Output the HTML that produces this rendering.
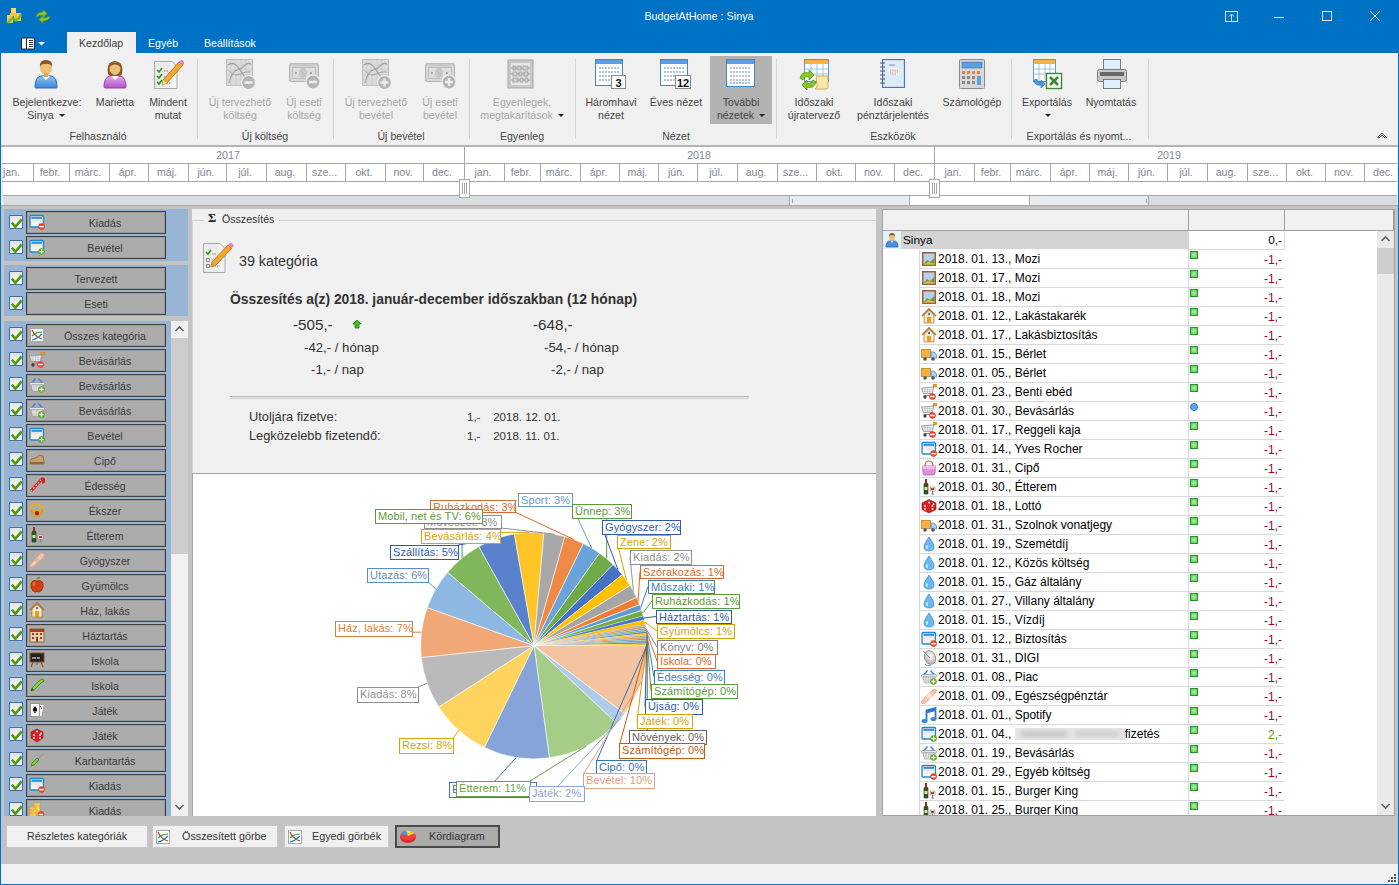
<!DOCTYPE html>
<html><head><meta charset="utf-8">
<style>
*{box-sizing:border-box}
html,body{margin:0;padding:0}
body{width:1399px;height:885px;overflow:hidden;position:relative;background:#F0F0F0;font-family:"Liberation Sans",sans-serif;font-size:10.5px;color:#444}
.a{position:absolute}
.t{position:absolute;white-space:nowrap;line-height:13px}
.c{text-align:center}
/* title */
#title{left:0;top:0;width:1399px;height:53px;background:#0072C6}
.tab{color:#fff;font-size:10.6px}
/* ribbon */
.rl{position:absolute;white-space:nowrap;line-height:13px;text-align:center;color:#444;font-size:10.6px}
.dis{color:#A6A6A6}
.sep{position:absolute;top:59px;width:1px;height:80px;background:#D5D5D5}
.ico{position:absolute;width:32px;height:32px}
/* timeline */
.mo{position:absolute;top:164px;height:17px;line-height:17px;text-align:center;padding-right:3px;color:#7E8790;font-size:10.6px;border-left:1px solid #A0A8B0;overflow:hidden}
.yr{position:absolute;top:147px;height:16px;line-height:16px;text-align:center;color:#7E8790;font-size:10.6px}
/* left panel */
.cb{position:absolute;left:9px;width:14px;height:14px;background:linear-gradient(#E4E4E4,#fff);border:1px solid #3D6FAE;border-radius:1px}
.cb svg{position:absolute;left:0;top:0}
.btn{position:absolute;left:26px;width:140px;height:23px;background:#ACACAC;border:1px solid #404040;box-shadow:inset 0 0 0 1px #9A9A9A}
.btn span{position:absolute;left:18px;right:0;top:4px;text-align:center;color:#3A3A3A;font-size:10.6px;line-height:14px;white-space:nowrap}
.bi{position:absolute;left:2px;top:2px;width:16px;height:16px}
/* right list */
.row{position:absolute;left:920px;width:364px;height:19px;border-bottom:1px solid #D8D8D8;background:#fff}
.row .dt{position:absolute;left:18px;top:2px;font-size:12px;color:#000;white-space:nowrap;line-height:14px}
.row .am{position:absolute;left:268px;width:96px;top:0;height:18px;border-left:1px solid #D8D8D8}
.row .am b{position:absolute;right:2px;top:3px;font-weight:normal;font-size:12px;color:#A00030;line-height:14px}
.row .am i{position:absolute;left:1px;top:1px;width:8px;height:8px;background:radial-gradient(#B8F0B0,#50C850);border:1px solid #1E9A1E}
.row .ri{position:absolute;left:1px;top:1px;width:16px;height:16px}
/* labels on pie */
.pl{position:absolute;height:15px;background:#fff;border:1px solid;font-size:11px;line-height:13px;padding:0 2px;white-space:nowrap;overflow:hidden;letter-spacing:.1px}
.bb{position:absolute;top:825px;height:23px;background:#F0F0F0;border:1px solid #C8C8C8;color:#333;font-size:10.8px;line-height:21px}
</style></head><body>
<!-- TITLE BAR -->
<div id="title" class="a"></div>
<!--TITLEICONS-->
<div class="t" style="left:599px;top:10px;width:200px;text-align:center;color:#fff;font-size:10.8px">BudgetAtHome : Sinya</div>
<!-- window buttons -->
<svg class="a" style="left:1220px;top:6px" width="170" height="20">
 <g stroke="#E6E6E6" stroke-width="1" fill="none">
  <rect x="5.5" y="5.5" width="12" height="10"/><line x1="11.5" y1="9" x2="11.5" y2="15.5"/><path d="M9 10.5 L11.5 8 L14 10.5"/>
  <line x1="54" y1="11.5" x2="64" y2="11.5"/>
  <rect x="102.5" y="5.5" width="9" height="9"/>
  <path d="M150 5 L160 15 M160 5 L150 15"/>
 </g>
</svg>
<!-- tabs -->
<div class="a" style="left:67px;top:32px;width:69px;height:22px;background:#F0F0F0"></div>
<div class="t tab" style="left:79px;top:37px;color:#3C3C3C">Kezdőlap</div>
<div class="t tab" style="left:148px;top:37px">Egyéb</div>
<div class="t tab" style="left:204px;top:37px">Beállítások</div>
<svg class="a" style="left:18px;top:35px" width="30" height="16">
 <rect x="3" y="2.5" width="14" height="12" rx="1.5" fill="#1a2a40"/>
 <rect x="4" y="3.5" width="4" height="10" fill="#F4F4F4"/><rect x="9" y="3.5" width="7" height="10" fill="#fff"/>
 <path d="M11 5.5h4M11 7.5h4M11 9.5h4M11 11.5h4" stroke="#333" stroke-width="1"/>
 <path d="M20 7h7l-3.5 3.5z" fill="#fff"/>
</svg>
<!-- ribbon body border -->
<div class="a" style="left:0;top:53px;width:1px;height:832px;background:#0072C6"></div>
<div class="a" style="left:1398px;top:53px;width:1px;height:832px;background:#0072C6"></div>
<div class="a" style="left:0;top:884px;width:1399px;height:1px;background:#0072C6"></div>
<div class="a" style="left:1px;top:145px;width:1397px;height:2px;background:#B4B4B4"></div>
<!-- quick access icons -->
<svg class="a" style="left:6px;top:7px" width="50" height="18">
 <rect x="5" y="1" width="5" height="6" fill="#F8D868"/><rect x="4" y="6" width="7" height="3" fill="#F5C048"/>
 <rect x="1" y="8" width="6" height="8" fill="#F8C458"/><rect x="8" y="6" width="7" height="8" fill="#F7C24E"/>
 <path d="M1.5 16 L6.5 11 L10 13.5 L15 8.5" stroke="#6BBE1E" stroke-width="2.3" fill="none"/>
 <path d="M13 7.5 L16 6.5 L15.5 10Z" fill="#6BBE1E"/>
 <path d="M30 10 Q31 5 37 5 L37 2.5 L41 6.5 L37 10.5 L37 8 Q33 8 30 10Z" fill="#8CC820" stroke="#5E9A10" stroke-width=".7"/>
 <path d="M44 9 Q43 14 37 14 L37 16.5 L33 12.5 L37 8.5 L37 11 Q41 11 44 9Z" fill="#8CC820" stroke="#5E9A10" stroke-width=".7"/>
</svg>
<!-- ribbon icons -->
<svg class="ico" style="left:30px;top:58px" viewBox="0 0 32 32">
 <defs><linearGradient id="gb" x1="0" y1="0" x2="0" y2="1"><stop offset="0" stop-color="#8CC4F0"/><stop offset="1" stop-color="#3A86D8"/></linearGradient>
 <linearGradient id="gp" x1="0" y1="0" x2="0" y2="1"><stop offset="0" stop-color="#E8A8F0"/><stop offset="1" stop-color="#B050C8"/></linearGradient></defs>
 <path d="M5 29 Q5 19 11 18 L21 18 Q27 19 27 29 Q27 30 26 30 L6 30 Q5 30 5 29Z" fill="url(#gb)" stroke="#2A6BB8" stroke-width="1"/>
 <path d="M12 18 L16 22 L20 18Z" fill="#fff"/>
 <ellipse cx="16" cy="10" rx="6" ry="7" fill="#E8C078"/>
 <path d="M10 9 Q9 2 16 2 Q23 2 22 9 Q20 5 16 6 Q12 5 10 9Z" fill="#8A5520"/>
 <rect x="14" y="15" width="4" height="4" fill="#D8A860"/>
</svg>
<svg class="ico" style="left:99px;top:58px" viewBox="0 0 32 32">
 <path d="M9 16 Q7 4 16 3 Q25 4 23 16 L21 18 L11 18Z" fill="#8A5520"/>
 <path d="M5 29 Q5 19 11 18 L21 18 Q27 19 27 29 Q27 30 26 30 L6 30 Q5 30 5 29Z" fill="url(#gp)" stroke="#9A40B0" stroke-width="1"/>
 <path d="M12 18 L16 22 L20 18Z" fill="#fff"/>
 <ellipse cx="16" cy="10.5" rx="5.5" ry="6.5" fill="#E8C078"/>
 <path d="M10.5 9 Q11 4 16 4.5 Q21 4 21.5 9 Q19 6 16 6.5 Q13 6 10.5 9Z" fill="#8A5520"/>
</svg>
<svg class="ico" style="left:152px;top:58px" viewBox="0 0 32 32">
 <path d="M2.5 3.5 L20 3.5 L25 8.5 L25 30.5 L2.5 30.5Z" fill="#F4F4F4" stroke="#A8A8A8"/>
 <rect x="3" y="4" width="15" height="25" fill="#E0E0E0" opacity=".5"/>
 <path d="M5 12 l2 2 l3 -4 M5 18 l2 2 l3 -4 M5 24 l2 2 l3 -4" stroke="#2A9A10" stroke-width="1.6" fill="none"/>
 <path d="M12 13h4 M12 19h4 M12 25h8" stroke="#888" stroke-dasharray="1.5 1"/>
 <path d="M11 22 L27 4 L31 7 L15 25 L10 27Z" fill="#F0A830" stroke="#B06810" stroke-width=".8"/>
 <path d="M27 4 L29 2 Q30.5 1.5 31.5 3 L33 5 L31 7Z" fill="#E880C0"/>
 <path d="M10 27 L11 22 L15 25Z" fill="#F8E0B0"/>
</svg>
<!-- disabled chart minus -->
<svg class="ico" style="left:224px;top:58px" viewBox="0 0 32 32">
 <rect x="2.5" y="1.5" width="26" height="26" fill="#DCDCDC" stroke="#BDBDBD"/>
 <path d="M7 2v25M12 2v25M17 2v25M22 2v25M3 7h25M3 12h25M3 17h25M3 22h25" stroke="#CACACA" stroke-width=".7"/>
 <path d="M4 7 Q9 3 14 9 Q18 15 21 19 Q24 22 27 21" stroke="#9C9C9C" fill="none" stroke-width="1.1"/>
 <path d="M5 25 Q8 13 13 12 Q18 11 20 8 Q23 4 27 6" stroke="#9C9C9C" fill="none" stroke-width="1.1"/>
 <path d="M4 12 Q10 19 16 16 Q22 13 27 14" stroke="#A8A8A8" fill="none" stroke-width="1"/>
 <circle cx="24.5" cy="24.5" r="7" fill="#B4B4B4" stroke="#F0F0F0" stroke-width="1.2"/>
 <rect x="20.5" y="23.2" width="8" height="2.6" fill="#EDEDED"/>
</svg>
<svg class="ico" style="left:288px;top:58px" viewBox="0 0 32 32">
 <rect x="1.5" y="5.5" width="29" height="18" rx="2" fill="#D8D8D8" stroke="#B0B0B0"/>
 <rect x="1.5" y="5.5" width="29" height="3" fill="#C8C8C8"/>
 <rect x="4.5" y="9.5" width="23" height="11" fill="#DEDEDE" stroke="#BEBEBE"/>
 <ellipse cx="15" cy="15" rx="4" ry="5" fill="#C6C6C6"/>
 <rect x="7" y="14" width="2" height="2" fill="#A8A8A8"/><rect x="22" y="14" width="2" height="2" fill="#A8A8A8"/>
 <circle cx="25" cy="24" r="7" fill="#B4B4B4" stroke="#F0F0F0" stroke-width="1.2"/>
 <rect x="21" y="22.7" width="8" height="2.6" fill="#EDEDED"/>
</svg>
<svg class="ico" style="left:360px;top:58px" viewBox="0 0 32 32">
 <rect x="2.5" y="1.5" width="26" height="26" fill="#DCDCDC" stroke="#BDBDBD"/>
 <path d="M7 2v25M12 2v25M17 2v25M22 2v25M3 7h25M3 12h25M3 17h25M3 22h25" stroke="#CACACA" stroke-width=".7"/>
 <path d="M4 7 Q9 3 14 9 Q18 15 21 19 Q24 22 27 21" stroke="#9C9C9C" fill="none" stroke-width="1.1"/>
 <path d="M5 25 Q8 13 13 12 Q18 11 20 8 Q23 4 27 6" stroke="#9C9C9C" fill="none" stroke-width="1.1"/>
 <path d="M4 12 Q10 19 16 16 Q22 13 27 14" stroke="#A8A8A8" fill="none" stroke-width="1"/>
 <circle cx="24.5" cy="24.5" r="7" fill="#B4B4B4" stroke="#F0F0F0" stroke-width="1.2"/>
 <path d="M20.5 24.5h8M24.5 20.5v8" stroke="#EDEDED" stroke-width="2.4"/>
</svg>
<svg class="ico" style="left:424px;top:58px" viewBox="0 0 32 32">
 <rect x="1.5" y="5.5" width="29" height="18" rx="2" fill="#D8D8D8" stroke="#B0B0B0"/>
 <rect x="1.5" y="5.5" width="29" height="3" fill="#C8C8C8"/>
 <rect x="4.5" y="9.5" width="23" height="11" fill="#DEDEDE" stroke="#BEBEBE"/>
 <ellipse cx="15" cy="15" rx="4" ry="5" fill="#C6C6C6"/>
 <rect x="7" y="14" width="2" height="2" fill="#A8A8A8"/><rect x="22" y="14" width="2" height="2" fill="#A8A8A8"/>
 <circle cx="25" cy="24" r="7" fill="#B4B4B4" stroke="#F0F0F0" stroke-width="1.2"/>
 <path d="M21 24h8M25 20v8" stroke="#EDEDED" stroke-width="2.4"/>
</svg>
<!-- abacus -->
<svg class="ico" style="left:506px;top:58px" viewBox="0 0 32 32">
 <rect x="2" y="2" width="25" height="28" fill="#C8C8C8" stroke="#A8A8A8"/>
 <rect x="5" y="5" width="19" height="22" fill="#E8E8E8"/>
 <path d="M5 10h19M5 16h19M5 22h19" stroke="#9A9A9A" stroke-width="1"/>
 <g fill="#D0D0D0" stroke="#9A9A9A" stroke-width=".8">
  <rect x="7" y="8" width="3" height="4"/><rect x="12" y="8" width="3" height="4"/><rect x="17" y="8" width="5" height="4"/>
  <rect x="7" y="14" width="4" height="4"/><rect x="13" y="14" width="3" height="4"/><rect x="18" y="14" width="4" height="4"/>
  <rect x="7" y="20" width="5" height="4"/><rect x="14" y="20" width="3" height="4"/><rect x="19" y="20" width="3" height="4"/>
 </g>
</svg>
<!-- views -->
<svg class="ico" style="left:595px;top:58px" viewBox="0 0 32 32">
 <rect x="0.5" y="1.5" width="27" height="26" fill="#fff" stroke="#3A88D0"/>
 <rect x="1" y="2" width="26" height="4" fill="#5AA0E0"/>
 <g stroke="#6A8AB0" stroke-width="1" stroke-dasharray="2 1"><path d="M4 10h20M4 14h20M4 18h20M4 22h20"/></g>
 <rect x="16.5" y="17.5" width="14" height="13" fill="#fff" stroke="#888"/>
 <text x="23.5" y="28.5" font-size="11" font-weight="bold" text-anchor="middle" fill="#111" font-family="Liberation Sans">3</text>
</svg>
<svg class="ico" style="left:660px;top:58px" viewBox="0 0 32 32">
 <rect x="0.5" y="1.5" width="27" height="26" fill="#fff" stroke="#3A88D0"/>
 <rect x="1" y="2" width="26" height="4" fill="#5AA0E0"/>
 <g stroke="#6A8AB0" stroke-width="1" stroke-dasharray="2 1"><path d="M4 10h20M4 14h20M4 18h20M4 22h20"/></g>
 <rect x="15.5" y="17.5" width="15" height="13" fill="#fff" stroke="#888"/>
 <text x="23" y="28.5" font-size="11" font-weight="bold" text-anchor="middle" fill="#111" font-family="Liberation Sans">12</text>
</svg>
<div class="a" style="left:710px;top:56px;width:62px;height:68px;background:#B2B2B2"></div>
<svg class="ico" style="left:725px;top:58px" viewBox="0 0 32 32">
 <rect x="1.5" y="1.5" width="28" height="27" fill="#fff" stroke="#3A88D0"/>
 <rect x="2" y="2" width="27" height="4" fill="#5AA0E0"/>
 <g stroke="#6A8AB0" stroke-width="1" stroke-dasharray="2 1"><path d="M5 10h21M5 14h21M5 18h21M5 22h21M5 25h21"/></g>
</svg>
<!-- tools -->
<svg class="ico" style="left:798px;top:58px" viewBox="0 0 32 32">
 <rect x="6.5" y="1.5" width="24" height="22" fill="#fff" stroke="#5A9AD8"/>
 <rect x="7" y="2" width="23" height="4" fill="#F8B040"/>
 <path d="M7 11h23M7 16h23M13 6v17M19 6v17M25 6v17" stroke="#9AC0E8"/>
 <path d="M18 18 h12 v11 q0 2 -2 2 h-11 q2 -1 2 -3z" fill="#F8E8A8" stroke="#C8A040" stroke-width=".8"/>
 <path d="M2 20 Q4 13 11 15 L11 12 L16 17 L11 22 L11 19 Q6 18 5 22Z" fill="#8CC820" stroke="#4E8A10" stroke-width=".7"/>
 <path d="M18 24 Q16 31 9 29 L9 32 L4 27 L9 22 L9 25 Q14 26 15 22Z" fill="#8CC820" stroke="#4E8A10" stroke-width=".7"/>
</svg>
<svg class="ico" style="left:877px;top:58px" viewBox="0 0 32 32">
 <rect x="5.5" y="1.5" width="22" height="28" fill="#C8DCF0" stroke="#3A78C0"/>
 <rect x="8" y="3" width="18" height="25" fill="#DDEAF8"/>
 <path d="M3 5h5M3 9h5M3 13h5M3 17h5M3 21h5M3 25h5" stroke="#555" stroke-width="1.2"/>
 <rect x="12" y="10" width="10" height="7" fill="#fff"/>
 <path d="M13 12h8M13 14h8M13 16h6" stroke="#777" stroke-width=".8" stroke-dasharray="1.5 .7"/>
 <path d="M12 7h6" stroke="#777" stroke-width=".8"/>
</svg>
<svg class="ico" style="left:956px;top:58px" viewBox="0 0 32 32">
 <rect x="3.5" y="1.5" width="25" height="29" rx="1" fill="#D8D8D8" stroke="#8A8A8A"/>
 <rect x="6" y="4" width="20" height="6" fill="#5AA0E0" stroke="#3A70B0" stroke-width=".6"/>
 <g fill="#8A8A8A">
 <rect x="6" y="13" width="3" height="3" fill="#F08030"/><rect x="11" y="13" width="3" height="3" fill="#F08030"/><rect x="16" y="13" width="3" height="3" fill="#F08030"/><rect x="21" y="13" width="3" height="3" fill="#F08030"/>
 <rect x="6" y="18" width="3" height="3"/><rect x="11" y="18" width="3" height="3"/><rect x="16" y="18" width="3" height="3"/>
 <rect x="6" y="23" width="3" height="3"/><rect x="11" y="23" width="3" height="3"/><rect x="16" y="23" width="3" height="3"/>
 <rect x="21" y="18" width="4" height="9" fill="#5AA0E0"/></g>
</svg>
<svg class="ico" style="left:1031px;top:58px" viewBox="0 0 32 32">
 <rect x="2.5" y="1.5" width="22" height="22" fill="#fff" stroke="#5A9AD8"/>
 <rect x="3" y="2" width="21" height="4" fill="#F8B040"/>
 <path d="M3 11h21M3 16h21M8 6v17M14 6v17M19 6v17" stroke="#9AC0E8"/>
 <rect x="15.5" y="15.5" width="15" height="15" fill="#fff" stroke="#3A8A30" stroke-width="1.4"/>
 <path d="M19 19 L27 27 M27 19 L19 27" stroke="#3A8A30" stroke-width="2.6"/>
 <path d="M3 22 Q3 28 10 27 L10 30 L14 26 L10 22 L10 24 Q6 24 6 21Z" fill="#4A9AE0" stroke="#2A6AB0" stroke-width=".6"/>
</svg>
<svg class="ico" style="left:1096px;top:58px" viewBox="0 0 32 32">
 <rect x="7.5" y="1.5" width="17" height="11" fill="#DDEEFF" stroke="#7A7A7A"/>
 <rect x="1.5" y="11.5" width="29" height="12" rx="2" fill="#C8C8C8" stroke="#7A7A7A"/>
 <rect x="4" y="14" width="24" height="4" fill="#6A6A6A"/>
 <rect x="7.5" y="21.5" width="17" height="9" fill="#DDEEFF" stroke="#7A7A7A"/>
</svg>
<!-- separators -->
<div class="sep" style="left:197px"></div>
<div class="sep" style="left:333px"></div>
<div class="sep" style="left:469px"></div>
<div class="sep" style="left:575px"></div>
<div class="sep" style="left:776px"></div>
<div class="sep" style="left:1011px"></div>
<div class="sep" style="left:1148px"></div>
<!-- labels -->
<div class="rl" style="left:-3px;width:100px;top:96px">Bejelentkezve:</div>
<div class="rl" style="left:-4px;width:100px;top:109px">Sinya <span style="display:inline-block;width:0;height:0;border-left:3px solid transparent;border-right:3px solid transparent;border-top:3px solid #222;vertical-align:2px;margin-left:2px"></span></div>
<div class="rl" style="left:65px;width:100px;top:96px">Marietta</div>
<div class="rl" style="left:118px;width:100px;top:96px">Mindent</div>
<div class="rl" style="left:118px;width:100px;top:109px">mutat</div>
<div class="rl" style="left:48px;width:100px;top:130px">Felhasználó</div>
<div class="rl dis" style="left:190px;width:100px;top:96px">Új tervezhető</div>
<div class="rl dis" style="left:190px;width:100px;top:109px">költség</div>
<div class="rl dis" style="left:254px;width:100px;top:96px">Új eseti</div>
<div class="rl dis" style="left:254px;width:100px;top:109px">költség</div>
<div class="rl" style="left:215px;width:100px;top:130px">Új költség</div>
<div class="rl dis" style="left:326px;width:100px;top:96px">Új tervezhető</div>
<div class="rl dis" style="left:326px;width:100px;top:109px">bevétel</div>
<div class="rl dis" style="left:390px;width:100px;top:96px">Új eseti</div>
<div class="rl dis" style="left:390px;width:100px;top:109px">bevétel</div>
<div class="rl" style="left:351px;width:100px;top:130px">Új bevétel</div>
<div class="rl dis" style="left:472px;width:100px;top:96px">Egyenlegek,</div>
<div class="rl dis" style="left:472px;width:100px;top:109px">megtakarítások <span style="display:inline-block;width:0;height:0;border-left:3px solid transparent;border-right:3px solid transparent;border-top:3px solid #222;vertical-align:2px;margin-left:2px"></span></div>
<div class="rl" style="left:472px;width:100px;top:130px">Egyenleg</div>
<div class="rl" style="left:561px;width:100px;top:96px">Háromhavi</div>
<div class="rl" style="left:561px;width:100px;top:109px">nézet</div>
<div class="rl" style="left:626px;width:100px;top:96px">Éves nézet</div>
<div class="rl" style="left:691px;width:100px;top:96px">További</div>
<div class="rl" style="left:691px;width:100px;top:109px">nézetek <span style="display:inline-block;width:0;height:0;border-left:3px solid transparent;border-right:3px solid transparent;border-top:3px solid #222;vertical-align:2px;margin-left:2px"></span></div>
<div class="rl" style="left:626px;width:100px;top:130px">Nézet</div>
<div class="rl" style="left:764px;width:100px;top:96px">Időszaki</div>
<div class="rl" style="left:764px;width:100px;top:109px">újratervező</div>
<div class="rl" style="left:843px;width:100px;top:96px">Időszaki</div>
<div class="rl" style="left:843px;width:100px;top:109px">pénztárjelentés</div>
<div class="rl" style="left:922px;width:100px;top:96px">Számológép</div>
<div class="rl" style="left:843px;width:100px;top:130px">Eszközök</div>
<div class="rl" style="left:997px;width:100px;top:96px">Exportálás</div>
<div class="rl" style="left:997px;width:100px;top:109px"><span style="display:inline-block;width:0;height:0;border-left:3px solid transparent;border-right:3px solid transparent;border-top:3px solid #222;vertical-align:2px;margin-left:2px"></span></div>
<div class="rl" style="left:1061px;width:100px;top:96px">Nyomtatás</div>
<div class="rl" style="left:1019px;width:120px;top:130px">Exportálás és nyomt...</div>
<svg class="a" style="left:1375px;top:129px" width="14" height="10"><path d="M2.5 8.5 L7 4 L11.5 8.5 L10 9 L7 6 L4 9Z" stroke="#555" stroke-width="1" fill="none"/></svg>

<div class="a" style="left:0;top:0;width:1399px;height:885px;overflow:hidden;pointer-events:none"><div class="a" style="left:2px;top:147px;width:1395px;height:49px;background:#fff;border-left:1px solid #E8E8E8;border-bottom:1px solid #A0A8B0"></div>
<div class="a" style="left:2px;top:163px;width:1395px;height:1px;background:#A0A8B0"></div>
<div class="a" style="left:2px;top:181px;width:1395px;height:1px;background:#A0A8B0"></div>
<div class="a" style="left:3px;top:196px;width:1394px;height:9px;background:#D9DCE0"></div>
<div class="a" style="left:789px;top:196px;width:360px;height:9px;background:#E9ECEF;border-left:1px solid #A0A8B0;border-right:1px solid #A0A8B0"></div>
<div class="a" style="left:909px;top:196px;width:121px;height:9px;background:#fff;border-left:1px solid #A0A8B0;border-right:1px solid #A0A8B0"></div>
<div class="a" style="left:792px;top:199px;width:1px;height:4px;background:#A0A8B0"></div>
<div class="a" style="left:1146px;top:199px;width:1px;height:4px;background:#A0A8B0"></div>
<div class="a" style="left:1px;top:205px;width:1397px;height:1px;background:#A8A8A8"></div>
<div class="yr" style="left:188px;width:80px">2017</div>
<div class="mo" style="left:-7px;width:40px;border-left:none;">jan.</div>
<div class="mo" style="left:33px;width:36px;">febr.</div>
<div class="mo" style="left:69px;width:40px;">márc.</div>
<div class="mo" style="left:109px;width:39px;">ápr.</div>
<div class="mo" style="left:148px;width:40px;">máj.</div>
<div class="mo" style="left:188px;width:38px;">jún.</div>
<div class="mo" style="left:226px;width:40px;">júl.</div>
<div class="mo" style="left:266px;width:40px;">aug.</div>
<div class="mo" style="left:306px;width:39px;">sze...</div>
<div class="mo" style="left:345px;width:40px;">okt.</div>
<div class="mo" style="left:385px;width:38px;">nov.</div>
<div class="mo" style="left:423px;width:40px;">dec.</div>
<div class="yr" style="left:659px;width:80px">2018</div>
<div class="a" style="left:464px;top:147px;width:1px;height:35px;background:#A0A8B0"></div>
<div class="mo" style="left:464px;width:40px;">jan.</div>
<div class="mo" style="left:504px;width:36px;">febr.</div>
<div class="mo" style="left:540px;width:40px;">márc.</div>
<div class="mo" style="left:580px;width:39px;">ápr.</div>
<div class="mo" style="left:619px;width:39px;">máj.</div>
<div class="mo" style="left:658px;width:39px;">jún.</div>
<div class="mo" style="left:697px;width:40px;">júl.</div>
<div class="mo" style="left:737px;width:40px;">aug.</div>
<div class="mo" style="left:777px;width:39px;">sze...</div>
<div class="mo" style="left:816px;width:39px;">okt.</div>
<div class="mo" style="left:855px;width:39px;">nov.</div>
<div class="mo" style="left:894px;width:40px;">dec.</div>
<div class="yr" style="left:1129px;width:80px">2019</div>
<div class="a" style="left:934px;top:147px;width:1px;height:35px;background:#A0A8B0"></div>
<div class="mo" style="left:934px;width:40px;">jan.</div>
<div class="mo" style="left:974px;width:36px;">febr.</div>
<div class="mo" style="left:1010px;width:40px;">márc.</div>
<div class="mo" style="left:1050px;width:39px;">ápr.</div>
<div class="mo" style="left:1089px;width:39px;">máj.</div>
<div class="mo" style="left:1128px;width:39px;">jún.</div>
<div class="mo" style="left:1167px;width:40px;">júl.</div>
<div class="mo" style="left:1207px;width:40px;">aug.</div>
<div class="mo" style="left:1247px;width:39px;">sze...</div>
<div class="mo" style="left:1286px;width:39px;">okt.</div>
<div class="mo" style="left:1325px;width:39px;">nov.</div>
<div class="mo" style="left:1364px;width:40px;">dec.</div>
<div class="a" style="left:459px;top:179px;width:11px;height:19px;background:#fff;border:1px solid #A0A8B0"></div><div class="a" style="left:462px;top:183px;width:5px;height:11px;border-left:1px solid #A0A8B0;border-right:1px solid #A0A8B0"></div><div class="a" style="left:464px;top:183px;width:1px;height:11px;background:#A0A8B0"></div>
<div class="a" style="left:929px;top:179px;width:11px;height:19px;background:#fff;border:1px solid #A0A8B0"></div><div class="a" style="left:932px;top:183px;width:5px;height:11px;border-left:1px solid #A0A8B0;border-right:1px solid #A0A8B0"></div><div class="a" style="left:934px;top:183px;width:1px;height:11px;background:#A0A8B0"></div></div>
<div class="a" style="left:1px;top:206px;width:1397px;height:658px;background:#C3C3C3"></div>
<div class="a" style="left:4px;top:209px;width:184px;height:52px;background:#98B4D4"></div>
<div class="a" style="left:4px;top:265px;width:184px;height:51px;background:#98B4D4"></div>
<div class="a" style="left:4px;top:321px;width:167px;height:495px;background:#98B4D4"></div>
<div class="a" style="left:171px;top:321px;width:17px;height:495px;background:#F0F0F0"></div>
<div class="a" style="left:171px;top:338px;width:17px;height:216px;background:#CDCDCD"></div>
<svg class="a" style="left:171px;top:321px" width="17" height="17"><path d="M4.5 10 L8.5 6 L12.5 10" stroke="#606060" stroke-width="1.6" fill="none"/></svg>
<svg class="a" style="left:171px;top:799px" width="17" height="17"><path d="M4.5 6 L8.5 10 L12.5 6" stroke="#606060" stroke-width="1.6" fill="none"/></svg>
<div class="a" style="left:0;top:0;width:192px;height:816px;overflow:hidden"><div class="cb" style="top:215px"><svg width="14" height="14" viewBox="0 0 14 14"><path d="M1.8 6.6 L5.4 10.8 L11.6 3.4" stroke="#4A9A0E" stroke-width="2.6" fill="none" stroke-linejoin="miter"/></svg></div>
<div class="btn" style="top:211px"><svg class="bi" viewBox="0 0 16 16"><defs><linearGradient id="wg" x1="0" y1="0" x2="0" y2="1"><stop offset="0" stop-color="#D8D8D8"/><stop offset="1" stop-color="#FFFFFF"/></linearGradient></defs><rect x="1" y="1.5" width="13.5" height="11.5" rx="1" fill="url(#wg)" stroke="#1E88D8" stroke-width="1.3"/><rect x="2.5" y="3" width="10.5" height="1.8" fill="#2A90E0"/><circle cx="12.6" cy="12.6" r="3.3" fill="#E04A2A"/><rect x="10.5" y="11.9" width="4.2" height="1.5" fill="#fff"/></svg><span>Kiadás</span></div>
<div class="cb" style="top:240px"><svg width="14" height="14" viewBox="0 0 14 14"><path d="M1.8 6.6 L5.4 10.8 L11.6 3.4" stroke="#4A9A0E" stroke-width="2.6" fill="none" stroke-linejoin="miter"/></svg></div>
<div class="btn" style="top:236px"><svg class="bi" viewBox="0 0 16 16"><defs><linearGradient id="wg2" x1="0" y1="0" x2="0" y2="1"><stop offset="0" stop-color="#D8D8D8"/><stop offset="1" stop-color="#FFFFFF"/></linearGradient></defs><rect x="1" y="1.5" width="13.5" height="11.5" rx="1" fill="url(#wg2)" stroke="#1E88D8" stroke-width="1.3"/><rect x="2.5" y="3" width="10.5" height="1.8" fill="#2A90E0"/><circle cx="12.6" cy="12.6" r="3.3" fill="#5AAE28"/><path d="M10.6 12.6h4M12.6 10.6v4" stroke="#fff" stroke-width="1.3"/></svg><span>Bevétel</span></div>
<div class="cb" style="top:271px"><svg width="14" height="14" viewBox="0 0 14 14"><path d="M1.8 6.6 L5.4 10.8 L11.6 3.4" stroke="#4A9A0E" stroke-width="2.6" fill="none" stroke-linejoin="miter"/></svg></div>
<div class="btn" style="top:267px"><span style="left:0">Tervezett</span></div>
<div class="cb" style="top:296px"><svg width="14" height="14" viewBox="0 0 14 14"><path d="M1.8 6.6 L5.4 10.8 L11.6 3.4" stroke="#4A9A0E" stroke-width="2.6" fill="none" stroke-linejoin="miter"/></svg></div>
<div class="btn" style="top:292px"><span style="left:0">Eseti</span></div>
<div class="cb" style="top:327px"><svg width="14" height="14" viewBox="0 0 14 14"><path d="M1.8 6.6 L5.4 10.8 L11.6 3.4" stroke="#4A9A0E" stroke-width="2.6" fill="none" stroke-linejoin="miter"/></svg></div>
<div class="btn" style="top:324px"><svg class="bi" viewBox="0 0 16 16"><rect x="1.5" y="1.5" width="13" height="13" fill="#fff" stroke="#A8A8A8"/><path d="M3 3 Q6 10 13 12" stroke="#D03020" fill="none" stroke-width="1.2"/><path d="M3 9 Q7 5 13 5" stroke="#30A030" fill="none" stroke-width="1.2"/><path d="M3 13 Q8 12 13 7" stroke="#2080D0" fill="none" stroke-width="1.2"/></svg><span>Összes kategória</span></div>
<div class="cb" style="top:352px"><svg width="14" height="14" viewBox="0 0 14 14"><path d="M1.8 6.6 L5.4 10.8 L11.6 3.4" stroke="#4A9A0E" stroke-width="2.6" fill="none" stroke-linejoin="miter"/></svg></div>
<div class="btn" style="top:349px"><svg class="bi" viewBox="0 0 16 16"><path d="M0.5 4 L12.5 3 L11.5 9.5 L2.5 9.5Z" fill="#F4F4F4" stroke="#8A8A8A" stroke-width=".8"/><path d="M2 5.5h10M2.5 7.5h9M4 4v5M6.5 4v5M9 4v5" stroke="#B8B8B8" stroke-width=".6"/><path d="M12.5 3 L13.5 1" stroke="#8A8A8A"/><path d="M2.5 11.5h8" stroke="#8A8A8A" stroke-width="1"/><circle cx="4" cy="13" r="1.7" fill="#444"/><rect x="12.5" y="0" width="3" height="3" fill="#F0A020" stroke="#C07010" stroke-width=".5"/><circle cx="11.5" cy="12.5" r="3.3" fill="#E84030"/><rect x="9.3" y="11.7" width="4.4" height="1.6" fill="#fff"/></svg><span>Bevásárlás</span></div>
<div class="cb" style="top:377px"><svg width="14" height="14" viewBox="0 0 14 14"><path d="M1.8 6.6 L5.4 10.8 L11.6 3.4" stroke="#4A9A0E" stroke-width="2.6" fill="none" stroke-linejoin="miter"/></svg></div>
<div class="btn" style="top:374px"><svg class="bi" viewBox="0 0 16 16"><path d="M2.5 6 L6.5 1.5 M9.5 1.5 L13.5 6" stroke="#2A8AE0" fill="none" stroke-width="1.5"/><rect x="0.5" y="5.5" width="15" height="2.5" rx="1" fill="#E8E8E8" stroke="#8A8A8A" stroke-width=".7"/><path d="M2 8 L14 8 L12.5 14 L3.5 14Z" fill="#F0F0F0" stroke="#9A9A9A" stroke-width=".7"/><path d="M3 10h10M3.5 12h9M5 8v6M7.5 8v6M10 8v6" stroke="#BBB" stroke-width=".6"/><circle cx="12.5" cy="12.5" r="3.3" fill="#5AAE28"/><path d="M10.5 12.5h4M12.5 10.5v4" stroke="#fff" stroke-width="1.3"/></svg><span>Bevásárlás</span></div>
<div class="cb" style="top:402px"><svg width="14" height="14" viewBox="0 0 14 14"><path d="M1.8 6.6 L5.4 10.8 L11.6 3.4" stroke="#4A9A0E" stroke-width="2.6" fill="none" stroke-linejoin="miter"/></svg></div>
<div class="btn" style="top:399px"><svg class="bi" viewBox="0 0 16 16"><path d="M2.5 6 L6.5 1.5 M9.5 1.5 L13.5 6" stroke="#2A8AE0" fill="none" stroke-width="1.5"/><rect x="0.5" y="5.5" width="15" height="2.5" rx="1" fill="#E8E8E8" stroke="#8A8A8A" stroke-width=".7"/><path d="M2 8 L14 8 L12.5 14 L3.5 14Z" fill="#F0F0F0" stroke="#9A9A9A" stroke-width=".7"/><path d="M3 10h10M3.5 12h9M5 8v6M7.5 8v6M10 8v6" stroke="#BBB" stroke-width=".6"/><circle cx="12.5" cy="12.5" r="3.3" fill="#5AAE28"/><path d="M10.5 12.5h4M12.5 10.5v4" stroke="#fff" stroke-width="1.3"/></svg><span>Bevásárlás</span></div>
<div class="cb" style="top:427px"><svg width="14" height="14" viewBox="0 0 14 14"><path d="M1.8 6.6 L5.4 10.8 L11.6 3.4" stroke="#4A9A0E" stroke-width="2.6" fill="none" stroke-linejoin="miter"/></svg></div>
<div class="btn" style="top:424px"><svg class="bi" viewBox="0 0 16 16"><defs><linearGradient id="wg2" x1="0" y1="0" x2="0" y2="1"><stop offset="0" stop-color="#D8D8D8"/><stop offset="1" stop-color="#FFFFFF"/></linearGradient></defs><rect x="1" y="1.5" width="13.5" height="11.5" rx="1" fill="url(#wg2)" stroke="#1E88D8" stroke-width="1.3"/><rect x="2.5" y="3" width="10.5" height="1.8" fill="#2A90E0"/><circle cx="12.6" cy="12.6" r="3.3" fill="#5AAE28"/><path d="M10.6 12.6h4M12.6 10.6v4" stroke="#fff" stroke-width="1.3"/></svg><span>Bevétel</span></div>
<div class="cb" style="top:452px"><svg width="14" height="14" viewBox="0 0 14 14"><path d="M1.8 6.6 L5.4 10.8 L11.6 3.4" stroke="#4A9A0E" stroke-width="2.6" fill="none" stroke-linejoin="miter"/></svg></div>
<div class="btn" style="top:449px"><svg class="bi" viewBox="0 0 16 16"><path d="M1 11 L2 7 L7 6 L10 3 L14 4 L15 10 L15 12 L1 12Z" fill="#C8A070" stroke="#8A6030" stroke-width=".8"/><rect x="1" y="10" width="14" height="2" fill="#8A6A40"/></svg><span>Cipő</span></div>
<div class="cb" style="top:477px"><svg width="14" height="14" viewBox="0 0 14 14"><path d="M1.8 6.6 L5.4 10.8 L11.6 3.4" stroke="#4A9A0E" stroke-width="2.6" fill="none" stroke-linejoin="miter"/></svg></div>
<div class="btn" style="top:474px"><svg class="bi" viewBox="0 0 16 16"><path d="M2 14 L12 3 Q14 1 15 3 Q15 5 13 5" stroke="#E02020" stroke-width="3" fill="none"/><path d="M2 14 L12 3" stroke="#fff" stroke-width="1.2" stroke-dasharray="1.5 2" fill="none"/></svg><span>Édesség</span></div>
<div class="cb" style="top:502px"><svg width="14" height="14" viewBox="0 0 14 14"><path d="M1.8 6.6 L5.4 10.8 L11.6 3.4" stroke="#4A9A0E" stroke-width="2.6" fill="none" stroke-linejoin="miter"/></svg></div>
<div class="btn" style="top:499px"><svg class="bi" viewBox="0 0 16 16"><ellipse cx="8" cy="6" rx="6" ry="3.5" fill="none" stroke="#E8B020" stroke-width="2"/><path d="M3 7 Q3 14 8 14 Q13 14 13 7" fill="none" stroke="#D8A010" stroke-width="2"/><circle cx="8" cy="11" r="2.2" fill="#C01818"/></svg><span>Ékszer</span></div>
<div class="cb" style="top:527px"><svg width="14" height="14" viewBox="0 0 14 14"><path d="M1.8 6.6 L5.4 10.8 L11.6 3.4" stroke="#4A9A0E" stroke-width="2.6" fill="none" stroke-linejoin="miter"/></svg></div>
<div class="btn" style="top:524px"><svg class="bi" viewBox="0 0 16 16"><rect x="4" y="0" width="2" height="4" fill="#B02020"/><path d="M3 5 Q3 4 5 4 Q7 4 7 5 L7 15 L3 15Z" fill="#2E5A1E" stroke="#1A3A10" stroke-width=".6"/><rect x="3.5" y="8" width="3" height="3" fill="#E8E0C0"/><path d="M9 8 L14 8 L14 12 L9 12Z" fill="#F0F0F0" stroke="#888" stroke-width=".6"/><rect x="10" y="9" width="3" height="2" fill="#C03030"/><path d="M11.5 12 v3 M10 15h3" stroke="#888"/></svg><span>Étterem</span></div>
<div class="cb" style="top:552px"><svg width="14" height="14" viewBox="0 0 14 14"><path d="M1.8 6.6 L5.4 10.8 L11.6 3.4" stroke="#4A9A0E" stroke-width="2.6" fill="none" stroke-linejoin="miter"/></svg></div>
<div class="btn" style="top:549px"><svg class="bi" viewBox="0 0 16 16"><path d="M2 12 L11 2 Q13 0 15 2 Q16 4 14 6 L5 14 Q3 16 1.5 14.5 Q0 13 2 12Z" fill="#F8C8B0" stroke="#E0A080" stroke-width=".8"/><rect x="6" y="6" width="4" height="4" transform="rotate(45 8 8)" fill="#F0B090"/></svg><span>Gyógyszer</span></div>
<div class="cb" style="top:577px"><svg width="14" height="14" viewBox="0 0 14 14"><path d="M1.8 6.6 L5.4 10.8 L11.6 3.4" stroke="#4A9A0E" stroke-width="2.6" fill="none" stroke-linejoin="miter"/></svg></div>
<div class="btn" style="top:574px"><svg class="bi" viewBox="0 0 16 16"><path d="M8 2 Q9 0 11 1" stroke="#4A9A20" stroke-width="1.2" fill="none"/><path d="M8 4 Q4 2 2 6 Q1 11 4 14 Q6 16 8 14.5 Q10 16 12 14 Q15 11 14 6 Q12 2 8 4Z" fill="#D04010" stroke="#902000" stroke-width=".6"/><ellipse cx="5" cy="7" rx="1.5" ry="2" fill="#F08050" opacity=".7"/></svg><span>Gyümölcs</span></div>
<div class="cb" style="top:602px"><svg width="14" height="14" viewBox="0 0 14 14"><path d="M1.8 6.6 L5.4 10.8 L11.6 3.4" stroke="#4A9A0E" stroke-width="2.6" fill="none" stroke-linejoin="miter"/></svg></div>
<div class="btn" style="top:599px"><svg class="bi" viewBox="0 0 16 16"><path d="M1 8 L8 1 L15 8" stroke="#B87030" stroke-width="1.6" fill="none"/><path d="M3 7 L8 2.5 L13 7 L13 15 L3 15Z" fill="#F8E8C0" stroke="#A07040" stroke-width=".7"/><rect x="6" y="9" width="4" height="6" fill="#E0A030"/><circle cx="8" cy="6" r="1.2" fill="#3080D0"/></svg><span>Ház, lakás</span></div>
<div class="cb" style="top:627px"><svg width="14" height="14" viewBox="0 0 14 14"><path d="M1.8 6.6 L5.4 10.8 L11.6 3.4" stroke="#4A9A0E" stroke-width="2.6" fill="none" stroke-linejoin="miter"/></svg></div>
<div class="btn" style="top:624px"><svg class="bi" viewBox="0 0 16 16"><rect x="1" y="2" width="14" height="13" fill="#E8D0B0" stroke="#8A5030" stroke-width=".8"/><rect x="1" y="2" width="14" height="3" fill="#A04020"/><g fill="#904020"><rect x="3" y="6" width="2" height="2"/><rect x="7" y="6" width="2" height="2"/><rect x="11" y="6" width="2" height="2"/><rect x="3" y="10" width="2" height="2"/><rect x="11" y="10" width="2" height="2"/><rect x="7" y="10" width="2" height="5"/></g></svg><span>Háztartás</span></div>
<div class="cb" style="top:652px"><svg width="14" height="14" viewBox="0 0 14 14"><path d="M1.8 6.6 L5.4 10.8 L11.6 3.4" stroke="#4A9A0E" stroke-width="2.6" fill="none" stroke-linejoin="miter"/></svg></div>
<div class="btn" style="top:649px"><svg class="bi" viewBox="0 0 16 16"><rect x="1" y="1" width="14" height="9" fill="#222" stroke="#8A5020" stroke-width="1"/><path d="M3 6h4M8 6h3" stroke="#fff" stroke-width="1.2"/><path d="M4 10 L2 15 M12 10 L14 15 M8 10v3" stroke="#8A5020" stroke-width="1.2"/></svg><span>Iskola</span></div>
<div class="cb" style="top:677px"><svg width="14" height="14" viewBox="0 0 14 14"><path d="M1.8 6.6 L5.4 10.8 L11.6 3.4" stroke="#4A9A0E" stroke-width="2.6" fill="none" stroke-linejoin="miter"/></svg></div>
<div class="btn" style="top:674px"><svg class="bi" viewBox="0 0 16 16"><path d="M2 14 L3 11 L11 3 Q13 1 15 3 Q15 5 13 5 L5 13Z" fill="#8AD040" stroke="#3A7A10" stroke-width=".8"/><path d="M2 14 L3 11 L5 13Z" fill="#2A5A10"/></svg><span>Iskola</span></div>
<div class="cb" style="top:702px"><svg width="14" height="14" viewBox="0 0 14 14"><path d="M1.8 6.6 L5.4 10.8 L11.6 3.4" stroke="#4A9A0E" stroke-width="2.6" fill="none" stroke-linejoin="miter"/></svg></div>
<div class="btn" style="top:699px"><svg class="bi" viewBox="0 0 16 16"><rect x="6" y="2" width="8" height="12" transform="rotate(12 10 8)" fill="#fff" stroke="#999" stroke-width=".7"/><path d="M11 4 L13 7" stroke="#D02020"/><rect x="1.5" y="1.5" width="9" height="13" fill="#fff" stroke="#888" stroke-width=".8"/><path d="M6 4 Q3 7 4 9 Q5 10 6 9 Q7 10 8 9 Q9 7 6 4Z M6 9 L5 11 L7 11Z" fill="#111"/></svg><span>Játék</span></div>
<div class="cb" style="top:727px"><svg width="14" height="14" viewBox="0 0 14 14"><path d="M1.8 6.6 L5.4 10.8 L11.6 3.4" stroke="#4A9A0E" stroke-width="2.6" fill="none" stroke-linejoin="miter"/></svg></div>
<div class="btn" style="top:724px"><svg class="bi" viewBox="0 0 16 16"><path d="M2 5 L8 2 L14 5 L14 11 L8 15 L2 11Z" fill="#D82020" stroke="#901010" stroke-width=".6"/><g fill="#fff"><circle cx="8" cy="4.5" r=".9"/><circle cx="5" cy="8" r=".9"/><circle cx="5" cy="11" r=".9"/><circle cx="11" cy="8" r=".9"/><circle cx="11" cy="11" r=".9"/><circle cx="12" cy="6.5" r=".9"/></g></svg><span>Játék</span></div>
<div class="cb" style="top:752px"><svg width="14" height="14" viewBox="0 0 14 14"><path d="M1.8 6.6 L5.4 10.8 L11.6 3.4" stroke="#4A9A0E" stroke-width="2.6" fill="none" stroke-linejoin="miter"/></svg></div>
<div class="btn" style="top:749px"><svg class="bi" viewBox="0 0 16 16"><path d="M9 7 L14 2" stroke="#999" stroke-width="1.3"/><path d="M2 14 L3 11 L8 6 L10 8 L5 13Z" fill="#7ACD30" stroke="#3A7A10" stroke-width=".7"/></svg><span>Karbantartás</span></div>
<div class="cb" style="top:777px"><svg width="14" height="14" viewBox="0 0 14 14"><path d="M1.8 6.6 L5.4 10.8 L11.6 3.4" stroke="#4A9A0E" stroke-width="2.6" fill="none" stroke-linejoin="miter"/></svg></div>
<div class="btn" style="top:774px"><svg class="bi" viewBox="0 0 16 16"><defs><linearGradient id="wg" x1="0" y1="0" x2="0" y2="1"><stop offset="0" stop-color="#D8D8D8"/><stop offset="1" stop-color="#FFFFFF"/></linearGradient></defs><rect x="1" y="1.5" width="13.5" height="11.5" rx="1" fill="url(#wg)" stroke="#1E88D8" stroke-width="1.3"/><rect x="2.5" y="3" width="10.5" height="1.8" fill="#2A90E0"/><circle cx="12.6" cy="12.6" r="3.3" fill="#E04A2A"/><rect x="10.5" y="11.9" width="4.2" height="1.5" fill="#fff"/></svg><span>Kiadás</span></div>
<div class="cb" style="top:802px"><svg width="14" height="14" viewBox="0 0 14 14"><path d="M1.8 6.6 L5.4 10.8 L11.6 3.4" stroke="#4A9A0E" stroke-width="2.6" fill="none" stroke-linejoin="miter"/></svg></div>
<div class="btn" style="top:799px"><svg class="bi" viewBox="0 0 16 16"><rect x="5" y="1" width="6" height="12" fill="#F8D060" stroke="#D0A030" stroke-width=".6"/><rect x="1" y="5" width="6" height="10" fill="#F8C850" stroke="#D0A030" stroke-width=".6"/><path d="M1 8h6M1 11h6M5 4h6" stroke="#D8A830" stroke-width=".6"/><circle cx="12" cy="12.5" r="3.3" fill="#E84030"/><rect x="9.8" y="11.7" width="4.4" height="1.6" fill="#fff"/></svg><span>Kiadás</span></div></div>
<div class="a" style="left:192px;top:209px;width:684px;height:264px;background:#F0F0F0"></div>
<div class="a" style="left:192px;top:220px;width:12px;height:1px;background:#D0D0D0"></div>
<div class="a" style="left:279px;top:220px;width:597px;height:1px;background:#D0D0D0"></div>
<div class="a" style="left:192px;top:221px;width:1px;height:252px;background:#D8D8D8"></div>
<div class="t" style="left:208px;top:210px;font-family:'Liberation Serif',serif;font-weight:bold;font-size:12.5px;color:#222;line-height:16px">Σ</div>
<div class="t" style="left:222px;top:213px;font-size:10.6px;color:#333">Összesítés</div>
<svg class="ico" style="left:202px;top:242px" viewBox="0 0 32 32">
 <path d="M1.5 1.5 L18 1.5 L23 6.5 L23 30.5 L1.5 30.5Z" fill="#F4F4F4" stroke="#A8A8A8"/>
 <rect x="2" y="2" width="14" height="28" fill="#E4E4E4" opacity=".6"/>
 <path d="M4 10 l2 2 l3 -4" stroke="#2A9A10" stroke-width="1.5" fill="none"/>
 <rect x="4.5" y="16.5" width="3" height="3" fill="none" stroke="#777" stroke-width=".8"/><rect x="4.5" y="22.5" width="3" height="3" fill="none" stroke="#777" stroke-width=".8"/>
 <path d="M10 12h4 M10 18h4 M10 24h8" stroke="#888" stroke-dasharray="1.5 1"/>
 <path d="M10 20 L26 3 L30 6 L14 23 L9 25Z" fill="#F0A830" stroke="#B06810" stroke-width=".8"/>
 <path d="M26 3 L28 1 Q29.5 0.5 30.5 2 L32 4 L30 6Z" fill="#E880C0"/>
</svg>
<div class="t" style="left:239px;top:252px;font-size:14.3px;color:#333;line-height:18px">39 kategória</div>
<div class="t" style="left:230px;top:291px;font-size:13.85px;font-weight:bold;color:#333;line-height:16px">Összesítés a(z) 2018. január-december időszakban (12 hónap)</div>
<div class="t" style="left:293px;top:316px;font-size:15.2px;color:#333;line-height:18px">-505,-</div>
<svg class="a" style="left:352px;top:319px" width="10" height="10"><path d="M5 1 L9 5 L7 5 L7 9 L3 9 L3 5 L1 5Z" fill="#40C020" stroke="#208010" stroke-width=".8"/></svg>
<div class="t" style="left:533px;top:316px;font-size:15.2px;color:#333;line-height:18px">-648,-</div>
<div class="t" style="left:304px;top:340px;font-size:13.2px;color:#333;line-height:16px">-42,- / hónap</div>
<div class="t" style="left:544px;top:340px;font-size:13.2px;color:#333;line-height:16px">-54,- / hónap</div>
<div class="t" style="left:311px;top:362px;font-size:13.2px;color:#333;line-height:16px">-1,- / nap</div>
<div class="t" style="left:551px;top:362px;font-size:13.2px;color:#333;line-height:16px">-2,- / nap</div>
<div class="a" style="left:230px;top:396px;width:519px;height:3px;border-top:1px solid #B8B8B8;border-bottom:1px solid #D0D0D0;background:#E8E8E8"></div>
<div class="t" style="left:249px;top:409px;font-size:12.8px;color:#333;line-height:16px">Utoljára fizetve:</div>
<div class="t" style="left:249px;top:428px;font-size:12.8px;color:#333;line-height:16px">Legközelebb fizetendő:</div>
<div class="t" style="left:467px;top:410px;font-size:11.5px;color:#333;line-height:14px">1,-&nbsp;&nbsp;&nbsp;&nbsp;2018. 12. 01.</div>
<div class="t" style="left:467px;top:429px;font-size:11.5px;color:#333;line-height:14px">1,-&nbsp;&nbsp;&nbsp;&nbsp;2018. 11. 01.</div>
<div class="a" style="left:192px;top:473px;width:684px;height:343px;background:#fff;border-top:1px solid #A0A0A0;border-left:1px solid #A8A8A8"></div>
<svg class="a" style="left:193px;top:474px" width="683" height="342" viewBox="193 474 683 342">
<path d="M534 645.6 L647.30 645.60 A113.3 113.3 0 0 1 624.60 713.63Z" fill="#F4C3A0" stroke="#fff" stroke-width=".6"/>
<path d="M534 645.6 L624.60 713.63 A113.3 113.3 0 0 1 616.46 723.30Z" fill="#AECBEA" stroke="#fff" stroke-width=".6"/>
<path d="M534 645.6 L616.46 723.30 A113.3 113.3 0 0 1 549.38 757.85Z" fill="#A5CD87" stroke="#fff" stroke-width=".6"/>
<path d="M534 645.6 L549.38 757.85 A113.3 113.3 0 0 1 484.33 747.43Z" fill="#87A4D8" stroke="#fff" stroke-width=".6"/>
<path d="M534 645.6 L484.33 747.43 A113.3 113.3 0 0 1 438.76 706.98Z" fill="#FFD45E" stroke="#fff" stroke-width=".6"/>
<path d="M534 645.6 L438.76 706.98 A113.3 113.3 0 0 1 421.32 657.44Z" fill="#BABABA" stroke="#fff" stroke-width=".6"/>
<path d="M534 645.6 L421.32 657.44 A113.3 113.3 0 0 1 427.26 607.59Z" fill="#F2A776" stroke="#fff" stroke-width=".6"/>
<path d="M534 645.6 L427.26 607.59 A113.3 113.3 0 0 1 447.59 572.32Z" fill="#8DB8E2" stroke="#fff" stroke-width=".6"/>
<path d="M534 645.6 L447.59 572.32 A113.3 113.3 0 0 1 478.90 546.60Z" fill="#80B75B" stroke="#fff" stroke-width=".6"/>
<path d="M534 645.6 L478.90 546.60 A113.3 113.3 0 0 1 514.33 534.02Z" fill="#5A82CC" stroke="#fff" stroke-width=".6"/>
<path d="M534 645.6 L514.33 534.02 A113.3 113.3 0 0 1 543.87 532.73Z" fill="#FFC425" stroke="#fff" stroke-width=".6"/>
<path d="M534 645.6 L543.87 532.73 A113.3 113.3 0 0 1 564.85 536.58Z" fill="#A8A8A8" stroke="#fff" stroke-width=".6"/>
<path d="M534 645.6 L564.85 536.58 A113.3 113.3 0 0 1 583.31 543.59Z" fill="#EE8A45" stroke="#fff" stroke-width=".6"/>
<path d="M534 645.6 L583.31 543.59 A113.3 113.3 0 0 1 599.63 553.25Z" fill="#69A3DA" stroke="#fff" stroke-width=".6"/>
<path d="M534 645.6 L599.63 553.25 A113.3 113.3 0 0 1 613.13 564.51Z" fill="#6FAA48" stroke="#fff" stroke-width=".6"/>
<path d="M534 645.6 L613.13 564.51 A113.3 113.3 0 0 1 622.30 574.61Z" fill="#4472C4" stroke="#fff" stroke-width=".6"/>
<path d="M534 645.6 L622.30 574.61 A113.3 113.3 0 0 1 630.08 585.56Z" fill="#FFC000" stroke="#fff" stroke-width=".6"/>
<path d="M534 645.6 L630.08 585.56 A113.3 113.3 0 0 1 636.52 597.36Z" fill="#A5A5A5" stroke="#fff" stroke-width=".6"/>
<path d="M534 645.6 L636.52 597.36 A113.3 113.3 0 0 1 639.63 604.63Z" fill="#ED7D31" stroke="#fff" stroke-width=".6"/>
<path d="M534 645.6 L639.63 604.63 A113.3 113.3 0 0 1 641.69 610.40Z" fill="#5B9BD5" stroke="#fff" stroke-width=".6"/>
<path d="M534 645.6 L641.69 610.40 A113.3 113.3 0 0 1 643.39 616.08Z" fill="#70AD47" stroke="#fff" stroke-width=".6"/>
<path d="M534 645.6 L643.39 616.08 A113.3 113.3 0 0 1 644.35 619.92Z" fill="#4472C4" stroke="#fff" stroke-width=".25"/>
<path d="M534 645.6 L644.35 619.92 A113.3 113.3 0 0 1 645.29 624.37Z" fill="#FFC000" stroke="#fff" stroke-width=".25"/>
<path d="M534 645.6 L645.29 624.37 A113.3 113.3 0 0 1 645.61 626.12Z" fill="#A5A5A5" stroke="#fff" stroke-width=".25"/>
<path d="M534 645.6 L645.61 626.12 A113.3 113.3 0 0 1 645.91 627.88Z" fill="#ED7D31" stroke="#fff" stroke-width=".25"/>
<path d="M534 645.6 L645.91 627.88 A113.3 113.3 0 0 1 646.17 629.64Z" fill="#5B9BD5" stroke="#fff" stroke-width=".25"/>
<path d="M534 645.6 L646.17 629.64 A113.3 113.3 0 0 1 646.41 631.40Z" fill="#70AD47" stroke="#fff" stroke-width=".25"/>
<path d="M534 645.6 L646.41 631.40 A113.3 113.3 0 0 1 646.62 633.17Z" fill="#4472C4" stroke="#fff" stroke-width=".25"/>
<path d="M534 645.6 L646.62 633.17 A113.3 113.3 0 0 1 646.80 634.94Z" fill="#FFC000" stroke="#fff" stroke-width=".25"/>
<path d="M534 645.6 L646.80 634.94 A113.3 113.3 0 0 1 646.95 636.71Z" fill="#A5A5A5" stroke="#fff" stroke-width=".25"/>
<path d="M534 645.6 L646.95 636.71 A113.3 113.3 0 0 1 647.08 638.49Z" fill="#ED7D31" stroke="#fff" stroke-width=".25"/>
<path d="M534 645.6 L647.08 638.49 A113.3 113.3 0 0 1 647.17 640.26Z" fill="#5B9BD5" stroke="#fff" stroke-width=".25"/>
<path d="M534 645.6 L647.17 640.26 A113.3 113.3 0 0 1 647.24 642.04Z" fill="#70AD47" stroke="#fff" stroke-width=".25"/>
<path d="M534 645.6 L647.24 642.04 A113.3 113.3 0 0 1 647.29 643.82Z" fill="#4472C4" stroke="#fff" stroke-width=".25"/>
<path d="M534 645.6 L647.29 643.82 A113.3 113.3 0 0 1 647.30 645.60Z" fill="#FFC000" stroke="#fff" stroke-width=".25"/>
<path d="M574.2 539.7 L515.0 512.0" stroke="#D9692A" stroke-width="1" fill="none"/>
<path d="M591.7 548.1 L572.0 506.0" stroke="#6A9ACB" stroke-width="1" fill="none"/>
<path d="M606.7 558.7 L606.7 518.0" stroke="#5E9A38" stroke-width="1" fill="none"/>
<path d="M554.5 534.2 L501.0 528.0" stroke="#909090" stroke-width="1" fill="none"/>
<path d="M462.1 558.0 L462.1 523.0" stroke="#5E9A38" stroke-width="1" fill="none"/>
<path d="M617.9 569.5 L602.0 527.0" stroke="#2F5BAA" stroke-width="1" fill="none"/>
<path d="M529.1 532.4 L500.0 532.4" stroke="#D9A300" stroke-width="1" fill="none"/>
<path d="M626.4 580.0 L617.0 541.5" stroke="#D9A300" stroke-width="1" fill="none"/>
<path d="M496.2 538.8 L458.0 545.0" stroke="#2F5BAA" stroke-width="1" fill="none"/>
<path d="M633.5 591.4 L630.0 557.0" stroke="#909090" stroke-width="1" fill="none"/>
<path d="M638.1 601.0 L640.0 571.5" stroke="#D9692A" stroke-width="1" fill="none"/>
<path d="M435.9 589.0 L428.0 582.0" stroke="#5B8BC3" stroke-width="1" fill="none"/>
<path d="M640.7 607.6 L648.0 586.5" stroke="#3A7EC0" stroke-width="1" fill="none"/>
<path d="M642.6 613.2 L652.0 601.0" stroke="#5E9A38" stroke-width="1" fill="none"/>
<path d="M643.9 618.0 L656.0 616.5" stroke="#2F5BAA" stroke-width="1" fill="none"/>
<path d="M421.5 632.2 L412.0 632.2" stroke="#D9803F" stroke-width="1" fill="none"/>
<path d="M644.8 622.0 L657.0 631.0" stroke="#D9A300" stroke-width="1" fill="none"/>
<path d="M646.1 628.9 L657.0 647.0" stroke="#808080" stroke-width="1" fill="none"/>
<path d="M646.3 630.8 L657.0 661.0" stroke="#D9692A" stroke-width="1" fill="none"/>
<path d="M646.6 632.8 L654.0 677.0" stroke="#3A7EC0" stroke-width="1" fill="none"/>
<path d="M646.8 634.7 L651.0 691.0" stroke="#5E9A38" stroke-width="1" fill="none"/>
<path d="M427.1 683.2 L418.0 687.0" stroke="#909090" stroke-width="1" fill="none"/>
<path d="M647.0 636.7 L645.0 706.5" stroke="#2F5BAA" stroke-width="1" fill="none"/>
<path d="M647.1 638.7 L637.0 721.0" stroke="#D9A300" stroke-width="1" fill="none"/>
<path d="M647.2 640.7 L647.2 730.0" stroke="#606060" stroke-width="1" fill="none"/>
<path d="M458.8 730.3 L453.0 738.0" stroke="#D9A300" stroke-width="1" fill="none"/>
<path d="M647.3 642.6 L620.0 743.0" stroke="#C55A11" stroke-width="1" fill="none"/>
<path d="M647.3 644.6 L597.0 760.0" stroke="#2E75B6" stroke-width="1" fill="none"/>
<path d="M641.5 681.4 L584.0 773.0" stroke="#E0A080" stroke-width="1" fill="none"/>
<path d="M516.3 757.5 L494.0 782.0" stroke="#4A6FB5" stroke-width="1" fill="none"/>
<path d="M586.0 746.3 L530.0 781.0" stroke="#6A9E4A" stroke-width="1" fill="none"/>
<path d="M620.7 718.6 L558.0 786.0" stroke="#8AA6D6" stroke-width="1" fill="none"/>
</svg>
<div class="a" style="left:0;top:0;width:876px;height:816px;overflow:hidden">
<div class="pl" style="left:430px;top:500px;width:86px;height:13px;border-color:#D9692A;color:#D9692A">Ruházkodás: 3%</div>
<div class="pl" style="left:518px;top:493px;width:55px;height:14px;border-color:#6A9ACB;color:#6A9ACB">Sport: 3%</div>
<div class="pl" style="left:572px;top:504px;width:60px;height:15px;border-color:#5E9A38;color:#5E9A38">Ünnep: 3%</div>
<div class="pl" style="left:424px;top:515px;width:78px;height:14px;border-color:#909090;color:#909090">Művészet: 3%</div>
<div class="pl" style="left:375px;top:509px;width:108px;height:15px;border-color:#5E9A38;color:#5E9A38">Mobil, net és TV: 6%</div>
<div class="pl" style="left:602px;top:520px;width:79px;height:15px;border-color:#2F5BAA;color:#2F5BAA">Gyógyszer: 2%</div>
<div class="pl" style="left:421px;top:529px;width:80px;height:15px;border-color:#D9A300;color:#D9A300">Bevásárlás: 4%</div>
<div class="pl" style="left:617px;top:535px;width:54px;height:14px;border-color:#D9A300;color:#D9A300">Zene: 2%</div>
<div class="pl" style="left:390px;top:545px;width:69px;height:15px;border-color:#2F5BAA;color:#2F5BAA">Szállítás: 5%</div>
<div class="pl" style="left:630px;top:550px;width:62px;height:15px;border-color:#909090;color:#909090">Kiadás: 2%</div>
<div class="pl" style="left:640px;top:565px;width:84px;height:14px;border-color:#D9692A;color:#D9692A">Szórakozás: 1%</div>
<div class="pl" style="left:367px;top:568px;width:62px;height:15px;border-color:#5B8BC3;color:#5B8BC3">Utazás: 6%</div>
<div class="pl" style="left:648px;top:580px;width:67px;height:14px;border-color:#3A7EC0;color:#3A7EC0">Műszaki: 1%</div>
<div class="pl" style="left:652px;top:594px;width:88px;height:15px;border-color:#5E9A38;color:#5E9A38">Ruházkodás: 1%</div>
<div class="pl" style="left:656px;top:610px;width:76px;height:14px;border-color:#2F5BAA;color:#2F5BAA">Háztartás: 1%</div>
<div class="pl" style="left:335px;top:621px;width:78px;height:16px;border-color:#D9803F;color:#D9803F">Ház, lakás: 7%</div>
<div class="pl" style="left:657px;top:624px;width:78px;height:15px;border-color:#D9A300;color:#D9A300">Gyümölcs: 1%</div>
<div class="pl" style="left:657px;top:640px;width:61px;height:15px;border-color:#808080;color:#808080">Könyv: 0%</div>
<div class="pl" style="left:657px;top:654px;width:59px;height:15px;border-color:#D9692A;color:#D9692A">Iskola: 0%</div>
<div class="pl" style="left:654px;top:670px;width:71px;height:15px;border-color:#3A7EC0;color:#3A7EC0">Édesség: 0%</div>
<div class="pl" style="left:651px;top:684px;width:87px;height:15px;border-color:#5E9A38;color:#5E9A38">Számítógép: 0%</div>
<div class="pl" style="left:357px;top:687px;width:62px;height:16px;border-color:#909090;color:#909090">Kiadás: 8%</div>
<div class="pl" style="left:645px;top:699px;width:58px;height:16px;border-color:#2F5BAA;color:#2F5BAA">Újság: 0%</div>
<div class="pl" style="left:637px;top:714px;width:56px;height:15px;border-color:#D9A300;color:#D9A300">Játék: 0%</div>
<div class="pl" style="left:629px;top:730px;width:78px;height:15px;border-color:#606060;color:#606060">Növények: 0%</div>
<div class="pl" style="left:399px;top:738px;width:55px;height:16px;border-color:#D9A300;color:#D9A300">Rezsi: 8%</div>
<div class="pl" style="left:619px;top:743px;width:86px;height:16px;border-color:#C55A11;color:#C55A11">Számítógép: 0%</div>
<div class="pl" style="left:596px;top:760px;width:51px;height:15px;border-color:#2E75B6;color:#2E75B6">Cipő: 0%</div>
<div class="pl" style="left:583px;top:773px;width:72px;height:16px;border-color:#E0A080;color:#E0A080">Bevétel: 10%</div>
<div class="pl" style="left:449px;top:782px;width:88px;height:16px;border-color:#4A6FB5;color:#4A6FB5">E</div>
<div class="pl" style="left:456px;top:781px;width:75px;height:16px;border-color:#6A9E4A;color:#6A9E4A">Étterem: 11%</div>
<div class="pl" style="left:529px;top:786px;width:56px;height:16px;border-color:#8AA6D6;color:#8AA6D6">Játék: 2%</div>
</div>
<div class="a" style="left:882px;top:209px;width:513px;height:607px;background:#fff;border:1px solid #A0A0A0"></div>
<div class="a" style="left:883px;top:210px;width:511px;height:21px;background:#F0F0F0;border-bottom:1px solid #A0A0A0"></div>
<div class="a" style="left:1188px;top:210px;width:1px;height:20px;background:#A0A0A0"></div>
<div class="a" style="left:1284px;top:210px;width:1px;height:20px;background:#A0A0A0"></div>
<div class="a" style="left:1393px;top:210px;width:1px;height:20px;background:#A0A0A0"></div>
<div class="a" style="left:883px;top:231px;width:18px;height:18px;background:#E5F3FB"></div>
<div class="a" style="left:901px;top:231px;width:287px;height:18px;background:#D3D3D3"></div>
<div class="a" style="left:1188px;top:231px;width:1px;height:19px;background:#D8D8D8"></div>
<div class="a" style="left:1284px;top:231px;width:1px;height:19px;background:#D8D8D8"></div>
<div class="a" style="left:1189px;top:249px;width:95px;height:1px;background:#D8D8D8"></div>
<svg class="a" style="left:884px;top:232px" width="16" height="16" viewBox="0 0 16 16">
 <path d="M2 15 Q2 9 6 9 L10 9 Q14 9 14 15Z" fill="#4A90E0" stroke="#2A60B0" stroke-width=".8"/>
 <path d="M6.5 9 L8 11 L9.5 9Z" fill="#fff"/>
 <ellipse cx="8" cy="5" rx="3" ry="3.5" fill="#E8C078"/><path d="M5 4.5 Q5 1 8 1 Q11 1 11 4.5 Q10 2.5 8 3 Q6 2.5 5 4.5Z" fill="#8A5520"/></svg>
<div class="t" style="left:903px;top:233px;font-size:11.8px;color:#000;line-height:14px">Sinya</div>
<div class="t" style="left:1188px;top:233px;width:94px;text-align:right;font-size:11.8px;color:#000;line-height:14px">0,-</div>
<div class="a" style="left:919px;top:250px;width:1px;height:565px;background:#D8D8D8"></div>
<div class="a" style="left:0;top:0;width:1377px;height:815px;overflow:hidden"><div class="row" style="top:250px"><svg class="ri" viewBox="0 0 16 16"><rect x="1" y="1" width="14" height="14" fill="#A06030"/><rect x="2.5" y="2.5" width="11" height="11" fill="#B8D0F0"/><path d="M2.5 13.5 L6 9 L9 11 L13.5 7 L13.5 13.5Z" fill="#6A9A30"/><path d="M2.5 13.5 L7 11 L13.5 12.5 L13.5 13.5Z" fill="#E8B840"/></svg><div class="dt">2018. 01. 13., Mozi</div><div class="am"><i></i><b style="color:#A00030">-1,-</b></div></div>
<div class="row" style="top:269px"><svg class="ri" viewBox="0 0 16 16"><rect x="1" y="1" width="14" height="14" fill="#A06030"/><rect x="2.5" y="2.5" width="11" height="11" fill="#B8D0F0"/><path d="M2.5 13.5 L6 9 L9 11 L13.5 7 L13.5 13.5Z" fill="#6A9A30"/><path d="M2.5 13.5 L7 11 L13.5 12.5 L13.5 13.5Z" fill="#E8B840"/></svg><div class="dt">2018. 01. 17., Mozi</div><div class="am"><i></i><b style="color:#A00030">-1,-</b></div></div>
<div class="row" style="top:288px"><svg class="ri" viewBox="0 0 16 16"><rect x="1" y="1" width="14" height="14" fill="#A06030"/><rect x="2.5" y="2.5" width="11" height="11" fill="#B8D0F0"/><path d="M2.5 13.5 L6 9 L9 11 L13.5 7 L13.5 13.5Z" fill="#6A9A30"/><path d="M2.5 13.5 L7 11 L13.5 12.5 L13.5 13.5Z" fill="#E8B840"/></svg><div class="dt">2018. 01. 18., Mozi</div><div class="am"><i></i><b style="color:#A00030">-1,-</b></div></div>
<div class="row" style="top:307px"><svg class="ri" viewBox="0 0 16 16"><path d="M1 8 L8 1 L15 8" stroke="#B87030" stroke-width="1.6" fill="none"/><path d="M3 7 L8 2.5 L13 7 L13 15 L3 15Z" fill="#F8E8C0" stroke="#A07040" stroke-width=".7"/><rect x="6" y="9" width="4" height="6" fill="#E0A030"/><circle cx="8" cy="6" r="1.2" fill="#3080D0"/></svg><div class="dt">2018. 01. 12., Lakástakarék</div><div class="am"><i></i><b style="color:#A00030">-1,-</b></div></div>
<div class="row" style="top:326px"><svg class="ri" viewBox="0 0 16 16"><path d="M1 8 L8 1 L15 8" stroke="#B87030" stroke-width="1.6" fill="none"/><path d="M3 7 L8 2.5 L13 7 L13 15 L3 15Z" fill="#F8E8C0" stroke="#A07040" stroke-width=".7"/><rect x="6" y="9" width="4" height="6" fill="#E0A030"/><circle cx="8" cy="6" r="1.2" fill="#3080D0"/></svg><div class="dt">2018. 01. 17., Lakásbiztosítás</div><div class="am"><i></i><b style="color:#A00030">-1,-</b></div></div>
<div class="row" style="top:345px"><svg class="ri" viewBox="0 0 16 16"><rect x="0.5" y="3.5" width="9" height="8" fill="#F8B040" stroke="#C08020" stroke-width=".8"/><path d="M10 6 L13 6 L15.5 9 L15.5 12 L10 12Z" fill="#A8D0F0" stroke="#5A8AC0" stroke-width=".8"/><circle cx="4" cy="13" r="1.8" fill="#555"/><circle cx="12" cy="13" r="1.8" fill="#555"/></svg><div class="dt">2018. 01. 15., Bérlet</div><div class="am"><i></i><b style="color:#A00030">-1,-</b></div></div>
<div class="row" style="top:364px"><svg class="ri" viewBox="0 0 16 16"><rect x="0.5" y="3.5" width="9" height="8" fill="#F8B040" stroke="#C08020" stroke-width=".8"/><path d="M10 6 L13 6 L15.5 9 L15.5 12 L10 12Z" fill="#A8D0F0" stroke="#5A8AC0" stroke-width=".8"/><circle cx="4" cy="13" r="1.8" fill="#555"/><circle cx="12" cy="13" r="1.8" fill="#555"/></svg><div class="dt">2018. 01. 05., Bérlet</div><div class="am"><i></i><b style="color:#A00030">-1,-</b></div></div>
<div class="row" style="top:383px"><svg class="ri" viewBox="0 0 16 16"><path d="M0.5 4 L12.5 3 L11.5 9.5 L2.5 9.5Z" fill="#F4F4F4" stroke="#8A8A8A" stroke-width=".8"/><path d="M2 5.5h10M2.5 7.5h9M4 4v5M6.5 4v5M9 4v5" stroke="#B8B8B8" stroke-width=".6"/><path d="M12.5 3 L13.5 1" stroke="#8A8A8A"/><path d="M2.5 11.5h8" stroke="#8A8A8A" stroke-width="1"/><circle cx="4" cy="13" r="1.7" fill="#444"/><rect x="12.5" y="0" width="3" height="3" fill="#F0A020" stroke="#C07010" stroke-width=".5"/><circle cx="11.5" cy="12.5" r="3.3" fill="#E84030"/><rect x="9.3" y="11.7" width="4.4" height="1.6" fill="#fff"/></svg><div class="dt">2018. 01. 23., Benti ebéd</div><div class="am"><i></i><b style="color:#A00030">-1,-</b></div></div>
<div class="row" style="top:402px"><svg class="ri" viewBox="0 0 16 16"><path d="M0.5 4 L12.5 3 L11.5 9.5 L2.5 9.5Z" fill="#F4F4F4" stroke="#8A8A8A" stroke-width=".8"/><path d="M2 5.5h10M2.5 7.5h9M4 4v5M6.5 4v5M9 4v5" stroke="#B8B8B8" stroke-width=".6"/><path d="M12.5 3 L13.5 1" stroke="#8A8A8A"/><path d="M2.5 11.5h8" stroke="#8A8A8A" stroke-width="1"/><circle cx="4" cy="13" r="1.7" fill="#444"/><rect x="12.5" y="0" width="3" height="3" fill="#F0A020" stroke="#C07010" stroke-width=".5"/><circle cx="11.5" cy="12.5" r="3.3" fill="#E84030"/><rect x="9.3" y="11.7" width="4.4" height="1.6" fill="#fff"/></svg><div class="dt">2018. 01. 30., Bevásárlás</div><div class="am"><i style="background:#5AAAE8;border-color:#2A7AC0;border-radius:50%"></i><b style="color:#A00030">-1,-</b></div></div>
<div class="row" style="top:421px"><svg class="ri" viewBox="0 0 16 16"><path d="M0.5 4 L12.5 3 L11.5 9.5 L2.5 9.5Z" fill="#F4F4F4" stroke="#8A8A8A" stroke-width=".8"/><path d="M2 5.5h10M2.5 7.5h9M4 4v5M6.5 4v5M9 4v5" stroke="#B8B8B8" stroke-width=".6"/><path d="M12.5 3 L13.5 1" stroke="#8A8A8A"/><path d="M2.5 11.5h8" stroke="#8A8A8A" stroke-width="1"/><circle cx="4" cy="13" r="1.7" fill="#444"/><rect x="12.5" y="0" width="3" height="3" fill="#F0A020" stroke="#C07010" stroke-width=".5"/><circle cx="11.5" cy="12.5" r="3.3" fill="#E84030"/><rect x="9.3" y="11.7" width="4.4" height="1.6" fill="#fff"/></svg><div class="dt">2018. 01. 17., Reggeli kaja</div><div class="am"><i></i><b style="color:#A00030">-1,-</b></div></div>
<div class="row" style="top:440px"><svg class="ri" viewBox="0 0 16 16"><defs><linearGradient id="wg" x1="0" y1="0" x2="0" y2="1"><stop offset="0" stop-color="#D8D8D8"/><stop offset="1" stop-color="#FFFFFF"/></linearGradient></defs><rect x="1" y="1.5" width="13.5" height="11.5" rx="1" fill="url(#wg)" stroke="#1E88D8" stroke-width="1.3"/><rect x="2.5" y="3" width="10.5" height="1.8" fill="#2A90E0"/><circle cx="12.6" cy="12.6" r="3.3" fill="#E04A2A"/><rect x="10.5" y="11.9" width="4.2" height="1.5" fill="#fff"/></svg><div class="dt">2018. 01. 14., Yves Rocher</div><div class="am"><i></i><b style="color:#A00030">-1,-</b></div></div>
<div class="row" style="top:459px"><svg class="ri" viewBox="0 0 16 16"><path d="M4 6 Q4 1 8 1 Q12 1 12 6" stroke="#B07040" fill="none" stroke-width="1.2"/><path d="M1.5 6 L14.5 6 L14 13 Q14 15 12 15 L4 15 Q2 15 2 13Z" fill="#E090D8" stroke="#A050A0" stroke-width=".7"/><rect x="1.5" y="6" width="13" height="3" fill="#F0B8F0"/><path d="M7 9 L9 9 L8 11Z" fill="#F0C020"/></svg><div class="dt">2018. 01. 31., Cipő</div><div class="am"><i></i><b style="color:#A00030">-1,-</b></div></div>
<div class="row" style="top:478px"><svg class="ri" viewBox="0 0 16 16"><rect x="4" y="0" width="2" height="4" fill="#B02020"/><path d="M3 5 Q3 4 5 4 Q7 4 7 5 L7 15 L3 15Z" fill="#2E5A1E" stroke="#1A3A10" stroke-width=".6"/><rect x="3.5" y="8" width="3" height="3" fill="#E8E0C0"/><path d="M9 8 L14 8 L14 12 L9 12Z" fill="#F0F0F0" stroke="#888" stroke-width=".6"/><rect x="10" y="9" width="3" height="2" fill="#C03030"/><path d="M11.5 12 v3 M10 15h3" stroke="#888"/></svg><div class="dt">2018. 01. 30., Étterem</div><div class="am"><i></i><b style="color:#A00030">-1,-</b></div></div>
<div class="row" style="top:497px"><svg class="ri" viewBox="0 0 16 16"><path d="M1 5 L8 1.5 L15 5 L15 11.5 L8 15 L1 11.5Z" fill="#D82020" stroke="#901010" stroke-width=".6"/><g fill="#fff"><circle cx="8" cy="4.5" r=".9"/><circle cx="4" cy="8" r=".9"/><circle cx="4" cy="11" r=".9"/><circle cx="11.5" cy="8" r=".9"/><circle cx="11.5" cy="11" r=".9"/><circle cx="12.5" cy="6.2" r=".9"/></g></svg><div class="dt">2018. 01. 18., Lottó</div><div class="am"><i></i><b style="color:#A00030">-1,-</b></div></div>
<div class="row" style="top:516px"><svg class="ri" viewBox="0 0 16 16"><rect x="0.5" y="3.5" width="9" height="8" fill="#F8B040" stroke="#C08020" stroke-width=".8"/><path d="M10 6 L13 6 L15.5 9 L15.5 12 L10 12Z" fill="#A8D0F0" stroke="#5A8AC0" stroke-width=".8"/><circle cx="4" cy="13" r="1.8" fill="#555"/><circle cx="12" cy="13" r="1.8" fill="#555"/></svg><div class="dt">2018. 01. 31., Szolnok vonatjegy</div><div class="am"><i></i><b style="color:#A00030">-1,-</b></div></div>
<div class="row" style="top:535px"><svg class="ri" viewBox="0 0 16 16"><path d="M8 1 Q13 8 13 11 Q13 15 8 15 Q3 15 3 11 Q3 8 8 1Z" fill="#6AB8F0" stroke="#3A88C8" stroke-width=".7"/><ellipse cx="6" cy="11" rx="1" ry="2" fill="#C8E8FF"/></svg><div class="dt">2018. 01. 19., Szemétdíj</div><div class="am"><i></i><b style="color:#A00030">-1,-</b></div></div>
<div class="row" style="top:554px"><svg class="ri" viewBox="0 0 16 16"><path d="M8 1 Q13 8 13 11 Q13 15 8 15 Q3 15 3 11 Q3 8 8 1Z" fill="#6AB8F0" stroke="#3A88C8" stroke-width=".7"/><ellipse cx="6" cy="11" rx="1" ry="2" fill="#C8E8FF"/></svg><div class="dt">2018. 01. 12., Közös költség</div><div class="am"><i></i><b style="color:#A00030">-1,-</b></div></div>
<div class="row" style="top:573px"><svg class="ri" viewBox="0 0 16 16"><path d="M8 1 Q13 8 13 11 Q13 15 8 15 Q3 15 3 11 Q3 8 8 1Z" fill="#6AB8F0" stroke="#3A88C8" stroke-width=".7"/><ellipse cx="6" cy="11" rx="1" ry="2" fill="#C8E8FF"/></svg><div class="dt">2018. 01. 15., Gáz általány</div><div class="am"><i></i><b style="color:#A00030">-1,-</b></div></div>
<div class="row" style="top:592px"><svg class="ri" viewBox="0 0 16 16"><path d="M8 1 Q13 8 13 11 Q13 15 8 15 Q3 15 3 11 Q3 8 8 1Z" fill="#6AB8F0" stroke="#3A88C8" stroke-width=".7"/><ellipse cx="6" cy="11" rx="1" ry="2" fill="#C8E8FF"/></svg><div class="dt">2018. 01. 27., Villany általány</div><div class="am"><i></i><b style="color:#A00030">-1,-</b></div></div>
<div class="row" style="top:611px"><svg class="ri" viewBox="0 0 16 16"><path d="M8 1 Q13 8 13 11 Q13 15 8 15 Q3 15 3 11 Q3 8 8 1Z" fill="#6AB8F0" stroke="#3A88C8" stroke-width=".7"/><ellipse cx="6" cy="11" rx="1" ry="2" fill="#C8E8FF"/></svg><div class="dt">2018. 01. 15., Vízdíj</div><div class="am"><i></i><b style="color:#A00030">-1,-</b></div></div>
<div class="row" style="top:630px"><svg class="ri" viewBox="0 0 16 16"><defs><linearGradient id="wg" x1="0" y1="0" x2="0" y2="1"><stop offset="0" stop-color="#D8D8D8"/><stop offset="1" stop-color="#FFFFFF"/></linearGradient></defs><rect x="1" y="1.5" width="13.5" height="11.5" rx="1" fill="url(#wg)" stroke="#1E88D8" stroke-width="1.3"/><rect x="2.5" y="3" width="10.5" height="1.8" fill="#2A90E0"/><circle cx="12.6" cy="12.6" r="3.3" fill="#E04A2A"/><rect x="10.5" y="11.9" width="4.2" height="1.5" fill="#fff"/></svg><div class="dt">2018. 01. 12., Biztosítás</div><div class="am"><i></i><b style="color:#A00030">-1,-</b></div></div>
<div class="row" style="top:649px"><svg class="ri" viewBox="0 0 16 16"><defs><radialGradient id="dg" cx=".6" cy=".4" r=".7"><stop offset="0" stop-color="#FFFFFF"/><stop offset="1" stop-color="#A8A8A8"/></radialGradient></defs><ellipse cx="9" cy="7.5" rx="5.5" ry="7" transform="rotate(-20 9 7.5)" fill="url(#dg)" stroke="#8A8A8A" stroke-width=".8"/><path d="M2 1 L9 8 M4 14 L6 16 L10 15" stroke="#8A8A8A" stroke-width="1" fill="none"/></svg><div class="dt">2018. 01. 31., DIGI</div><div class="am"><i></i><b style="color:#A00030">-1,-</b></div></div>
<div class="row" style="top:668px"><svg class="ri" viewBox="0 0 16 16"><path d="M2.5 6 L6.5 1.5 M9.5 1.5 L13.5 6" stroke="#2A8AE0" fill="none" stroke-width="1.5"/><rect x="0.5" y="5.5" width="15" height="2.5" rx="1" fill="#E8E8E8" stroke="#8A8A8A" stroke-width=".7"/><path d="M2 8 L14 8 L12.5 14 L3.5 14Z" fill="#F0F0F0" stroke="#9A9A9A" stroke-width=".7"/><path d="M3 10h10M3.5 12h9M5 8v6M7.5 8v6M10 8v6" stroke="#BBB" stroke-width=".6"/><circle cx="12.5" cy="12.5" r="3.3" fill="#5AAE28"/><path d="M10.5 12.5h4M12.5 10.5v4" stroke="#fff" stroke-width="1.3"/></svg><div class="dt">2018. 01. 08., Piac</div><div class="am"><i></i><b style="color:#A00030">-1,-</b></div></div>
<div class="row" style="top:687px"><svg class="ri" viewBox="0 0 16 16"><path d="M1.5 12 L11 2.5 Q13.5 0.5 15 2 Q16 3.5 13.5 6 L4 15 Q2 16.5 0.8 15.2 Q-.5 13.8 1.5 12Z" fill="#F8C8A8" stroke="#E89870" stroke-width=".8"/><rect x="6" y="6" width="4.5" height="4.5" transform="rotate(45 8.2 8.2)" fill="#FBE0D0"/><g fill="#E8A080"><circle cx="4" cy="12" r=".5"/><circle cx="12" cy="4" r=".5"/><circle cx="13" cy="3" r=".5"/><circle cx="3" cy="13" r=".5"/></g></svg><div class="dt">2018. 01. 09., Egészségpénztár</div><div class="am"><i></i><b style="color:#A00030">-1,-</b></div></div>
<div class="row" style="top:706px"><svg class="ri" viewBox="0 0 16 16"><path d="M5.5 14 L5.5 3.5 L14.5 1 L14.5 12" stroke="#2A78C8" stroke-width="1.8" fill="none"/><path d="M5.5 3.5 L14.5 1 L14.5 4 L5.5 6.5Z" fill="#2A78C8"/><ellipse cx="3.5" cy="14" rx="3" ry="2" fill="#3A88D8"/><ellipse cx="12.5" cy="12" rx="3" ry="2" fill="#3A88D8"/></svg><div class="dt">2018. 01. 01., Spotify</div><div class="am"><i></i><b style="color:#A00030">-1,-</b></div></div>
<div class="row" style="top:725px"><svg class="ri" viewBox="0 0 16 16"><defs><linearGradient id="wg2" x1="0" y1="0" x2="0" y2="1"><stop offset="0" stop-color="#D8D8D8"/><stop offset="1" stop-color="#FFFFFF"/></linearGradient></defs><rect x="1" y="1.5" width="13.5" height="11.5" rx="1" fill="url(#wg2)" stroke="#1E88D8" stroke-width="1.3"/><rect x="2.5" y="3" width="10.5" height="1.8" fill="#2A90E0"/><circle cx="12.6" cy="12.6" r="3.3" fill="#5AAE28"/><path d="M10.6 12.6h4M12.6 10.6v4" stroke="#fff" stroke-width="1.3"/></svg><div class="dt">2018. 01. 04., <span style="display:inline-block;width:110px;height:12px;vertical-align:-2px;background:#E6E6E6;position:relative;overflow:hidden"><span style="position:absolute;left:6px;top:3px;width:46px;height:6px;background:#C8C8C8;filter:blur(2px)"></span><span style="position:absolute;left:60px;top:3px;width:44px;height:6px;background:#CFCFCF;filter:blur(2px)"></span></span>fizetés</div><div class="am"><i></i><b style="color:#50A020">2,-</b></div></div>
<div class="row" style="top:744px"><svg class="ri" viewBox="0 0 16 16"><path d="M2.5 6 L6.5 1.5 M9.5 1.5 L13.5 6" stroke="#2A8AE0" fill="none" stroke-width="1.5"/><rect x="0.5" y="5.5" width="15" height="2.5" rx="1" fill="#E8E8E8" stroke="#8A8A8A" stroke-width=".7"/><path d="M2 8 L14 8 L12.5 14 L3.5 14Z" fill="#F0F0F0" stroke="#9A9A9A" stroke-width=".7"/><path d="M3 10h10M3.5 12h9M5 8v6M7.5 8v6M10 8v6" stroke="#BBB" stroke-width=".6"/><circle cx="12.5" cy="12.5" r="3.3" fill="#5AAE28"/><path d="M10.5 12.5h4M12.5 10.5v4" stroke="#fff" stroke-width="1.3"/></svg><div class="dt">2018. 01. 19., Bevásárlás</div><div class="am"><i></i><b style="color:#A00030">-1,-</b></div></div>
<div class="row" style="top:763px"><svg class="ri" viewBox="0 0 16 16"><defs><linearGradient id="wg" x1="0" y1="0" x2="0" y2="1"><stop offset="0" stop-color="#D8D8D8"/><stop offset="1" stop-color="#FFFFFF"/></linearGradient></defs><rect x="1" y="1.5" width="13.5" height="11.5" rx="1" fill="url(#wg)" stroke="#1E88D8" stroke-width="1.3"/><rect x="2.5" y="3" width="10.5" height="1.8" fill="#2A90E0"/><circle cx="12.6" cy="12.6" r="3.3" fill="#E04A2A"/><rect x="10.5" y="11.9" width="4.2" height="1.5" fill="#fff"/></svg><div class="dt">2018. 01. 29., Egyéb költség</div><div class="am"><i></i><b style="color:#A00030">-1,-</b></div></div>
<div class="row" style="top:782px"><svg class="ri" viewBox="0 0 16 16"><rect x="4" y="0" width="2" height="4" fill="#B02020"/><path d="M3 5 Q3 4 5 4 Q7 4 7 5 L7 15 L3 15Z" fill="#2E5A1E" stroke="#1A3A10" stroke-width=".6"/><rect x="3.5" y="8" width="3" height="3" fill="#E8E0C0"/><path d="M9 8 L14 8 L14 12 L9 12Z" fill="#F0F0F0" stroke="#888" stroke-width=".6"/><rect x="10" y="9" width="3" height="2" fill="#C03030"/><path d="M11.5 12 v3 M10 15h3" stroke="#888"/></svg><div class="dt">2018. 01. 15., Burger King</div><div class="am"><i></i><b style="color:#A00030">-1,-</b></div></div>
<div class="row" style="top:801px"><svg class="ri" viewBox="0 0 16 16"><rect x="4" y="0" width="2" height="4" fill="#B02020"/><path d="M3 5 Q3 4 5 4 Q7 4 7 5 L7 15 L3 15Z" fill="#2E5A1E" stroke="#1A3A10" stroke-width=".6"/><rect x="3.5" y="8" width="3" height="3" fill="#E8E0C0"/><path d="M9 8 L14 8 L14 12 L9 12Z" fill="#F0F0F0" stroke="#888" stroke-width=".6"/><rect x="10" y="9" width="3" height="2" fill="#C03030"/><path d="M11.5 12 v3 M10 15h3" stroke="#888"/></svg><div class="dt">2018. 01. 25., Burger King</div><div class="am"><i></i><b style="color:#A00030">-1,-</b></div></div></div>
<div class="a" style="left:1377px;top:231px;width:17px;height:584px;background:#EAEAEA"></div>
<div class="a" style="left:1377px;top:248px;width:17px;height:26px;background:#CDCDCD"></div>
<svg class="a" style="left:1377px;top:231px" width="17" height="17"><path d="M4.5 10 L8.5 6 L12.5 10" stroke="#606060" stroke-width="1.6" fill="none"/></svg>
<svg class="a" style="left:1377px;top:798px" width="17" height="17"><path d="M4.5 6 L8.5 10 L12.5 6" stroke="#606060" stroke-width="1.6" fill="none"/></svg>
<div class="bb" style="left:6px;width:142px;text-align:center">Részletes kategóriák</div>
<div class="bb" style="left:152px;width:126px"><svg class="a" style="left:2px;top:3px" width="16" height="16" viewBox="0 0 16 16"><rect x="1.5" y="1.5" width="13" height="13" fill="#fff" stroke="#A8A8A8"/><path d="M3 3 Q6 10 13 12" stroke="#D03020" fill="none" stroke-width="1.2"/><path d="M3 9 Q7 5 13 5" stroke="#30A030" fill="none" stroke-width="1.2"/><path d="M3 13 Q8 12 13 7" stroke="#2080D0" fill="none" stroke-width="1.2"/></svg><span class="t" style="left:29px;top:4px">Összesített görbe</span></div>
<div class="bb" style="left:284px;width:105px"><svg class="a" style="left:2px;top:3px" width="16" height="16" viewBox="0 0 16 16"><rect x="1.5" y="1.5" width="13" height="13" fill="#fff" stroke="#A8A8A8"/><path d="M3 3 Q6 10 13 12" stroke="#D03020" fill="none" stroke-width="1.2"/><path d="M3 9 Q7 5 13 5" stroke="#30A030" fill="none" stroke-width="1.2"/><path d="M3 13 Q8 12 13 7" stroke="#2080D0" fill="none" stroke-width="1.2"/></svg><span class="t" style="left:27px;top:4px">Egyedi görbék</span></div>
<div class="bb" style="left:395px;width:105px;background:#ABABAB;border:2px solid #4A4A4A"><svg class="a" style="left:2px;top:1px" width="18" height="18" viewBox="0 0 18 18"><path d="M1 8 Q1 15 9 15 Q17 15 17 8 L9 8Z" fill="#E02828"/><ellipse cx="9" cy="8" rx="8" ry="4" fill="#F04040"/><path d="M9 8 L1.5 6 Q3 3 7 2.5Z" fill="#4A90E0"/><path d="M9 8 L7 2.5 Q12 2 15.5 5Z" fill="#F8D030"/></svg><span class="t" style="left:32px;top:3px">Kördiagram</span></div>
<svg class="a" style="left:1387px;top:873px" width="10" height="10"><g fill="#555"><rect x="7" y="1" width="2" height="2"/><rect x="4" y="4" width="2" height="2"/><rect x="7" y="4" width="2" height="2"/><rect x="1" y="7" width="2" height="2"/><rect x="4" y="7" width="2" height="2"/><rect x="7" y="7" width="2" height="2"/></g></svg>

</body></html>
